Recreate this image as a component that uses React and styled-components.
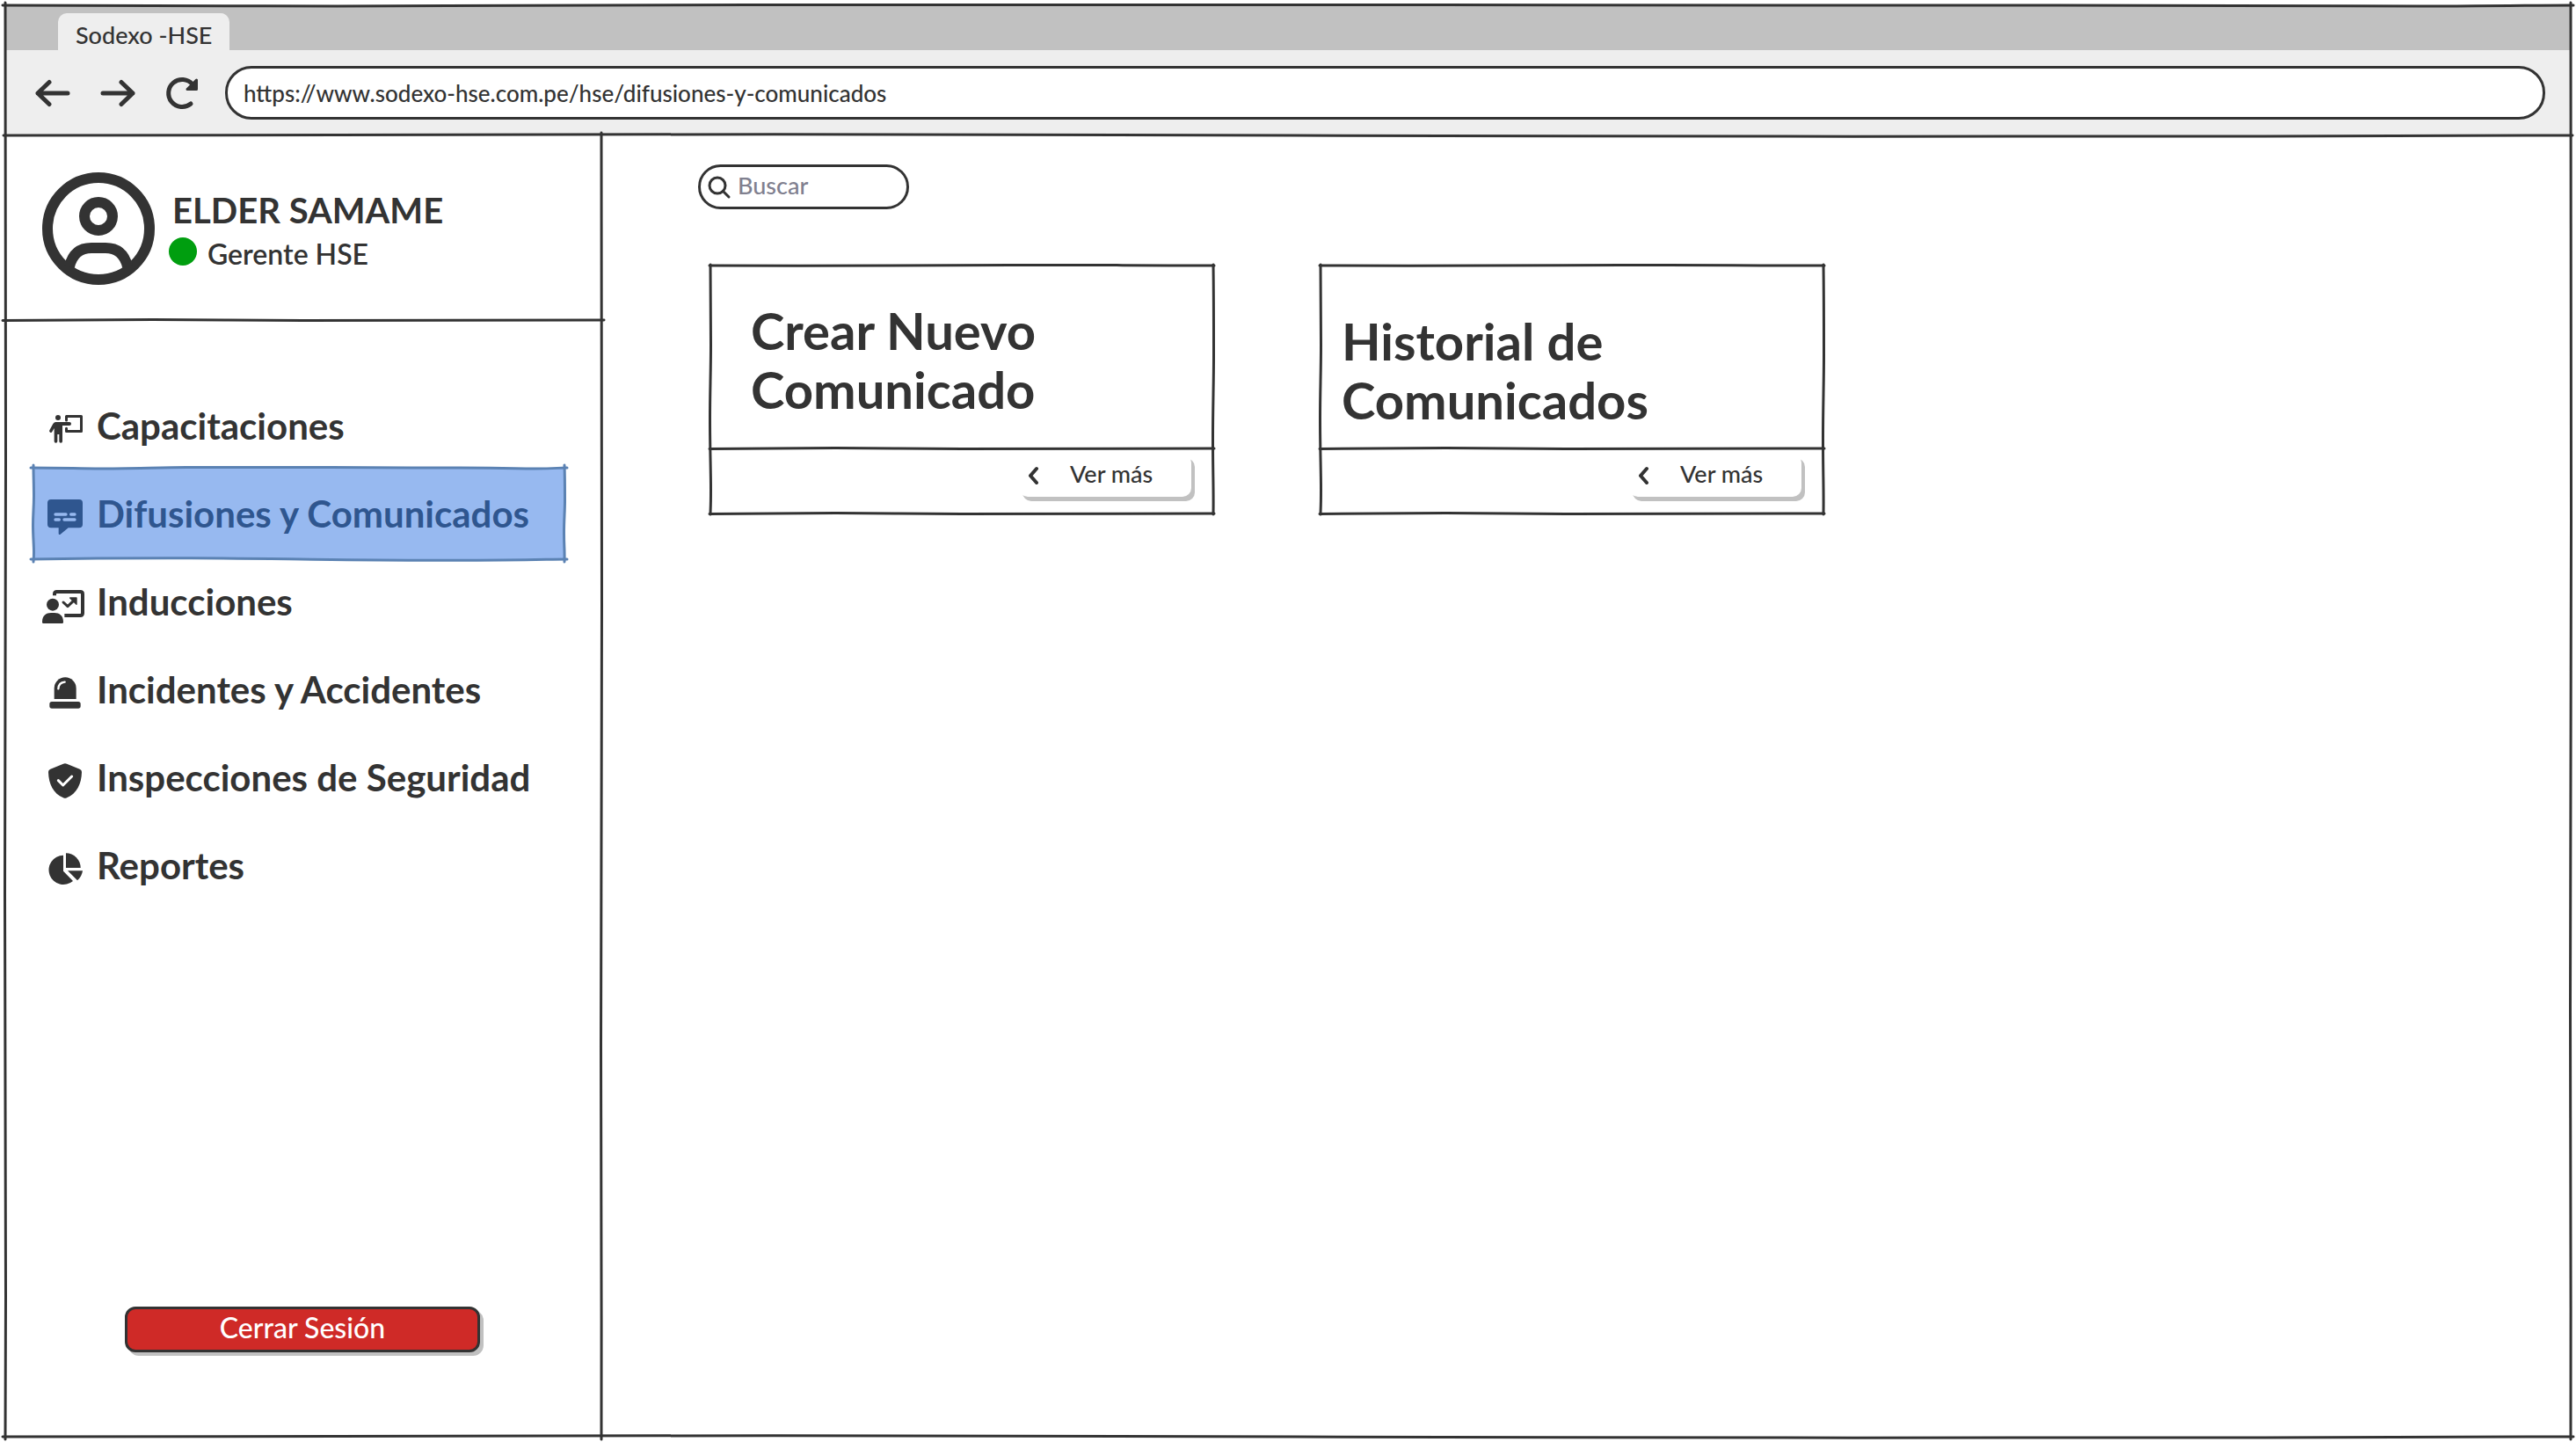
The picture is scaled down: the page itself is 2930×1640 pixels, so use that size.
import React from "react";
import styled, { createGlobalStyle, css } from "styled-components";

const ink = "#333333";
const blueInk = "#2f568f";
const blueFill = "#97b9f0";
const blueLine = "#5b82b3";

const GlobalStyle = createGlobalStyle`
  *, *::before, *::after { box-sizing: border-box; }
  body { margin: 0; background: #ffffff; color: ${ink}; }
  body, button, input { font-family: Lato, "Open Sans", sans-serif; font-weight: 500; }
  h1, h2, p, ul { margin: 0; padding: 0; }
`;

/* ---------- hand-drawn strokes ---------- */

const HStroke = styled.svg`
  position: absolute;
  left: ${(p) => -p.$reach}px;
  width: calc(100% + ${(p) => 2 * p.$reach}px);
  height: 8px;
  overflow: visible;
  pointer-events: none;
  z-index: 2;
  ${(p) => (p.$edge === "top" ? "top: -4px;" : "bottom: -4px;")}
`;

const VStroke = styled.svg`
  position: absolute;
  top: ${(p) => -p.$reach}px;
  height: calc(100% + ${(p) => 2 * p.$reach}px);
  width: 8px;
  overflow: visible;
  pointer-events: none;
  z-index: 2;
  ${(p) => (p.$edge === "left" ? "left: -4px;" : "right: -4px;")}
`;

const wobbleH = {
  top: "M0 4 C60 4 90 5 130 5 S230 4 290 3.5 S420 3 560 3.5 S700 4 800 4 S900 5 940 5 S980 4 1000 4",
  bottom: "M0 4 C90 3 180 2.5 300 2.7 S480 4 560 4.5 S800 5.5 880 5 S970 4 1000 4",
};
const flatH = {
  top: "M0 4 C200 4.5 400 4 600 3.5 S800 4 1000 4",
  bottom: "M0 4.5 C60 4 150 3.5 250 3.5 S400 4.500 500 4.5 S800 4 1000 4",
};
const wobbleV = {
  left: "M4 0 C4 120 4.5 200 4.5 320 S3.5 500 3.5 620 S4.5 820 4.5 900 S4 980 4 1000",
  right: "M4 0 C4.5 120 4.5 240 4.5 360 S3.5 560 3.5 700 S4.5 900 4 1000",
};

function Stroke({ edge, color = ink, weight = 3, reach = 3, calm = false }) {
  const horizontal = edge === "top" || edge === "bottom";
  const Line = horizontal ? HStroke : VStroke;
  const paths = horizontal ? (calm ? flatH : wobbleH) : wobbleV;
  return (
    <Line
      $edge={edge}
      $reach={reach}
      viewBox={horizontal ? "0 0 1000 8" : "0 0 8 1000"}
      preserveAspectRatio="none"
      aria-hidden="true"
    >
      <path
        d={paths[edge]}
        fill="none"
        stroke={color}
        strokeWidth={weight}
        strokeLinecap="round"
        vectorEffect="non-scaling-stroke"
      />
    </Line>
  );
}

function SketchFrame(props) {
  return (
    <>
      <Stroke edge="top" {...props} />
      <Stroke edge="bottom" {...props} />
      <Stroke edge="left" {...props} />
      <Stroke edge="right" {...props} />
    </>
  );
}

/* ---------- browser window ---------- */

const Page = styled.div`
  min-height: 100vh;
  padding: 6px;
  display: flex;
`;

const Window = styled.div`
  position: relative;
  flex: 1;
  display: flex;
  flex-direction: column;
`;

const Chrome = styled.header`
  position: relative;
  background: #eeeeee;
`;

const TabStrip = styled.div`
  display: flex;
  align-items: flex-end;
  height: 51px;
  padding-left: 60px;
  background: #c1c1c1;
`;

const Tab = styled.div`
  height: 42px;
  padding: 0 20px;
  border-radius: 10px 10px 0 0;
  background: #eeeeee;
  font-size: 27px;
  line-height: 50px;
`;

const Toolbar = styled.div`
  display: flex;
  align-items: center;
  gap: 28px;
  height: 97px;
  padding: 0 29px 0 34px;
`;

const History = styled.div`
  display: flex;
  gap: 34px;
`;

const ToolButton = styled.button`
  width: 40px;
  height: 40px;
  padding: 0;
  border: 0;
  background: none;
  color: ${ink};
  svg { display: block; }
`;

const Address = styled.input`
  flex: 1;
  min-width: 0;
  height: 61px;
  padding: 0 18px;
  border: 3px solid ${ink};
  border-radius: 30px;
  background: #ffffff;
  color: ${ink};
  font-size: 26px;
`;

const Content = styled.div`
  flex: 1;
  display: grid;
  grid-template-columns: 678px 1fr;
`;

/* ---------- sidebar ---------- */

const Sidebar = styled.aside`
  position: relative;
  display: flex;
  flex-direction: column;
`;

const Profile = styled.section`
  position: relative;
  display: flex;
  align-items: center;
  gap: 16px;
  height: 210px;
  padding: 2px 42px 0;
`;

const Identity = styled.div`
  display: flex;
  flex-direction: column;
  padding-top: 8px;
`;

const Name = styled.h1`
  padding-left: 4px;
  font-size: 40px;
  line-height: 50px;
  font-weight: 700;
`;

const Role = styled.p`
  display: flex;
  align-items: center;
  gap: 12px;
  font-size: 32px;
  line-height: 50px;
  font-weight: 600;
`;

const Status = styled.span`
  width: 32px;
  height: 32px;
  margin-bottom: 6px;
  border-radius: 50%;
  background: #009e0f;
`;

const Menu = styled.ul`
  display: flex;
  flex-direction: column;
  padding: 70px 42px 0 32px;
  list-style: none;
`;

const MenuLink = styled.a`
  position: relative;
  display: flex;
  align-items: center;
  gap: 12px;
  height: 100px;
  padding-left: 10px;
  color: ${(p) => (p.$active ? blueInk : ink)};
  font-size: 42px;
  font-weight: 700;
  white-space: nowrap;
  text-decoration: none;
  svg { flex: none; }
`;

const Highlight = styled.span`
  position: absolute;
  inset: -2px 0;
  z-index: -1;
  background: ${blueFill};
`;

const Logout = styled.button`
  height: 52px;
  margin: auto 138px 96px 136px;
  padding: 0 0 6px;
  border: 3px solid ${ink};
  border-radius: 12px;
  background: #cf2a27;
  box-shadow: 4px 4px 0 #c1c1c1;
  color: #ffffff;
  font-size: 32px;
`;

/* ---------- main area ---------- */

const Main = styled.main`
  display: flex;
  flex-direction: column;
  align-items: flex-start;
  gap: 64px;
  padding: 33px 110px;
`;

const Search = styled.label`
  display: flex;
  align-items: center;
  gap: 6px;
  width: 240px;
  height: 51px;
  padding: 0 18px 0 8px;
  border: 3px solid ${ink};
  border-radius: 26px;
  svg { flex: none; }
`;

const SearchInput = styled.input`
  min-width: 0;
  width: 100%;
  padding: 0 0 4px;
  border: 0;
  outline: 0;
  background: none;
  color: ${ink};
  font-size: 27px;
  &::placeholder { color: #80808f; opacity: 1; }
`;

const Cards = styled.div`
  display: flex;
  flex-wrap: wrap;
  gap: 60px 122px;
  padding-left: 14px;
`;

const CardBox = styled.article`
  position: relative;
  width: 572px;
`;

const CardBody = styled.div`
  position: relative;
  height: 208px;
  ${(p) =>
    p.$inset
      ? css`padding: 40px 46px;`
      : css`padding: 52px 24px;`}
`;

const CardTitle = styled.h2`
  max-width: 380px;
  font-size: 58px;
  line-height: 67px;
  font-weight: 700;
`;

const CardFooter = styled.div`
  display: flex;
  justify-content: flex-end;
  height: 74px;
  padding: 6px 25px 0 0;
`;

const MoreButton = styled.button`
  display: flex;
  align-items: center;
  gap: 34px;
  width: 196px;
  height: 49px;
  padding: 0 0 4px 8px;
  border: 0;
  border-radius: 10px;
  background: #ffffff;
  box-shadow: 4px 5px 0 #c1c1c1;
  color: ${ink};
  font-size: 27px;
`;

/* ---------- drawings ---------- */

const ArrowLeft = () => (
  <svg width="40" height="40" viewBox="0 0 40 40" fill="none" stroke="currentColor" strokeWidth="5" strokeLinecap="round" strokeLinejoin="round">
    <path d="M37 20H3M16 7.5L3 20L16 32.500" />
  </svg>
);

const ArrowRight = () => (
  <svg width="40" height="40" viewBox="0 0 40 40" fill="none" stroke="currentColor" strokeWidth="5" strokeLinecap="round" strokeLinejoin="round">
    <path d="M3 20H37M24 7.500L37 20L24 32.500" />
  </svg>
);

const Reload = () => (
  <svg width="40" height="40" viewBox="0 0 40 40" fill="none" stroke="currentColor" strokeWidth="5" strokeLinecap="round" strokeLinejoin="round">
    <path d="M29 32A15.500 15.500 0 1 1 31 10" />
    <path d="M35.500 5V15.500H25Z" fill="currentColor" strokeWidth="3" />
  </svg>
);

const Avatar = () => (
  <svg width="128" height="128" viewBox="0 0 128 128" fill="none" stroke={ink} strokeWidth="12" aria-hidden="true">
    <circle cx="64" cy="64" r="58" />
    <circle cx="64" cy="50" r="16" />
    <path d="M31 107Q36 86 56 86H72Q92 86 97 107" />
  </svg>
);

const Glyph = ({ top, children }) => (
  <svg width="50" height="50" viewBox={`54 ${top} 150 150`} fill="currentColor" strokeLinecap="round" strokeLinejoin="round" aria-hidden="true">
    {children}
  </svg>
);

const TrainerIcon = () => (
  <Glyph top={27}>
    <circle cx="108" cy="75" r="9" />
    <path d="M136.500 84V70.500H187.500V121.500H136.500V112" fill="none" stroke="currentColor" strokeWidth="9" />
    <path d="M100 90H147A6 6 0 0 1 147 102H123V156A5 5 0 0 1 112 156V132H106V156A5 5 0 0 1 95 156V111L88 123A5 5 0 0 1 79 118L91 96Q95 90 100 90Z" />
  </Glyph>
);

const CaptionIcon = () => (
  <Glyph top={327}>
    <path d="M84 354H180Q192 354 192 366V439Q192 451 180 451H143L116 473Q110 476 110 470V451H84Q72 451 72 439V366Q72 354 84 354Z" />
    <path d="M99 405H135M152 405H165M99 423H112M129 423H165" fill="none" stroke={blueFill} strokeWidth="10" />
  </Glyph>
);

const LessonIcon = () => (
  <Glyph top={27}>
    <path d="M96 82V77Q96 69 104 69H184Q192 69 192 77V142Q192 150 184 150H130" fill="none" stroke="currentColor" strokeWidth="12" strokeLinecap="butt" />
    <circle cx="90" cy="113" r="21" />
    <path d="M54 172C54 150 68 141 84 141H96C112 141 126 150 126 172Q126 178 120 178H60Q54 178 54 172Z" />
    <path d="M126 105L141 119L163 98" fill="none" stroke="currentColor" strokeWidth="9" />
    <path d="M149 90H171V112Z" stroke="currentColor" strokeWidth="4" />
  </Glyph>
);

const SirenIcon = () => (
  <Glyph top={327}>
    <path d="M95 435V398A37.500 37 0 0 1 170 398V435Z" />
    <rect x="79" y="444" width="106" height="23" rx="8" />
    <path d="M109 400Q110 379 131 377" fill="none" stroke="#ffffff" strokeWidth="7" />
  </Glyph>
);

const ShieldIcon = () => (
  <Glyph top={627}>
    <path d="M126 656Q132 653 138 656L182 674Q189 677 189 684C188 725 172 758 138 772Q132 775 126 772C92 758 76 725 75 684Q75 677 82 674Z" />
    <path d="M109 713L125 729L155 699" fill="none" stroke="#ffffff" strokeWidth="9" />
  </Glyph>
);

const PieIcon = () => (
  <Glyph top={927}>
    <path d="M126 968V1022L159 1056A50 50 0 1 1 126 968Z" />
    <path d="M135 961A50 50 0 0 1 185 1011H135Z" />
    <path d="M141 1021H192A52 52 0 0 1 174 1054Z" />
  </Glyph>
);

const Magnifier = () => (
  <svg width="28" height="28" viewBox="0 0 28 28" fill="none" stroke={ink} strokeWidth="3" strokeLinecap="round" aria-hidden="true">
    <circle cx="11" cy="12" r="9" />
    <path d="M17.500 18.500L24 25" />
  </svg>
);

const ChevronLeft = () => (
  <svg width="16" height="24" viewBox="0 0 16 24" fill="none" stroke="currentColor" strokeWidth="4" strokeLinecap="round" strokeLinejoin="round" aria-hidden="true">
    <path d="M12 6L5 14L12 22" />
  </svg>
);

/* ---------- screen ---------- */

const menu = [
  { label: "Capacitaciones", Icon: TrainerIcon },
  { label: "Difusiones y Comunicados", Icon: CaptionIcon, active: true },
  { label: "Inducciones", Icon: LessonIcon },
  { label: "Incidentes y Accidentes", Icon: SirenIcon },
  { label: "Inspecciones de Seguridad", Icon: ShieldIcon },
  { label: "Reportes", Icon: PieIcon },
];

function Card({ title, inset }) {
  return (
    <CardBox>
      <SketchFrame reach={1} calm />
      <CardBody $inset={inset}>
        <CardTitle>{title}</CardTitle>
        <Stroke edge="bottom" reach={1} calm />
      </CardBody>
      <CardFooter>
        <MoreButton type="button">
          <ChevronLeft />
          Ver más
        </MoreButton>
      </CardFooter>
    </CardBox>
  );
}

export default function App() {
  return (
    <Page>
      <GlobalStyle />
      <Window>
        <SketchFrame />
        <Chrome>
          <TabStrip>
            <Tab>Sodexo -HSE</Tab>
          </TabStrip>
          <Toolbar>
            <History>
              <ToolButton type="button" aria-label="Atrás"><ArrowLeft /></ToolButton>
              <ToolButton type="button" aria-label="Adelante"><ArrowRight /></ToolButton>
              <ToolButton type="button" aria-label="Recargar"><Reload /></ToolButton>
            </History>
            <Address
              aria-label="Dirección"
              defaultValue="https://www.sodexo-hse.com.pe/hse/difusiones-y-comunicados"
              spellCheck={false}
            />
          </Toolbar>
          <Stroke edge="bottom" reach={2} />
        </Chrome>
        <Content>
          <Sidebar>
            <Stroke edge="right" />
            <Profile>
              <Avatar />
              <Identity>
                <Name>ELDER SAMAME</Name>
                <Role><Status />Gerente HSE</Role>
              </Identity>
              <Stroke edge="bottom" calm />
            </Profile>
            <nav>
              <Menu>
                {menu.map(({ label, Icon, active }) => (
                  <li key={label}>
                    <MenuLink href="#" $active={active} aria-current={active ? "page" : undefined}>
                      {active && (
                        <Highlight>
                          <SketchFrame color={blueLine} />
                        </Highlight>
                      )}
                      <Icon />
                      {label}
                    </MenuLink>
                  </li>
                ))}
              </Menu>
            </nav>
            <Logout type="button">Cerrar Sesión</Logout>
          </Sidebar>
          <Main>
            <Search>
              <Magnifier />
              <SearchInput type="text" placeholder="Buscar" aria-label="Buscar" />
            </Search>
            <Cards>
              <Card title="Crear Nuevo Comunicado" inset />
              <Card title="Historial de Comunicados" />
            </Cards>
          </Main>
        </Content>
      </Window>
    </Page>
  );
}
